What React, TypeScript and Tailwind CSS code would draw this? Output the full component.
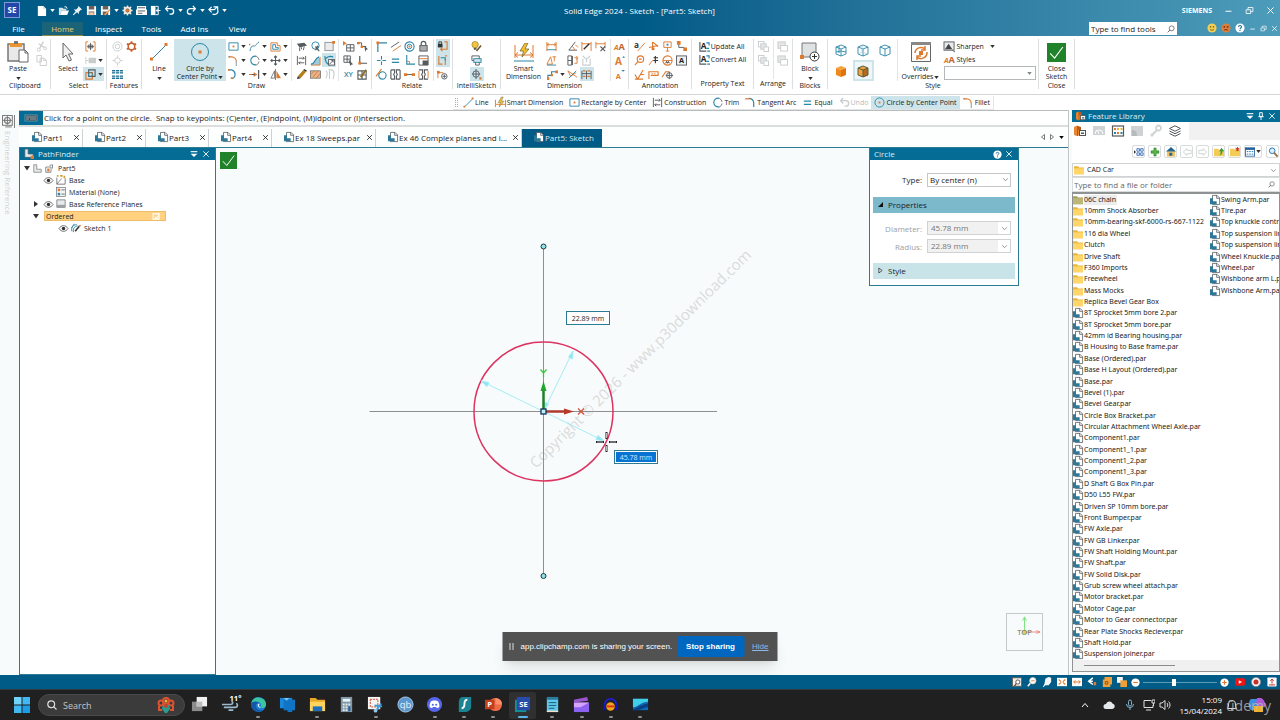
import React, { useState } from 'react';
import clsx from 'clsx';

const TEAL = '#2d86a8';
const ORANGE = '#dd7a2e';
const GRAY = '#555a5e';
const FAINT = '#c9cccd';

interface ShapeProps {
  d: string;
  c?: string;
  w?: number;
}

// Stroked path
const S: React.FC<ShapeProps> = ({ d, c = TEAL, w = 1 }) => (
  <path d={d} fill="none" stroke={c} strokeWidth={w} />
);

// Filled path
const F: React.FC<ShapeProps> = ({ d, c = ORANGE }) => <path d={d} fill={c} />;

// All small icons are drawn on a 12x12 grid
const art: Record<string, React.ReactNode> = {
  // Title bar
  doc: <><F c="#fff" d="M2 1h6l3 3v8H2z" /><S c="#b9d3df" w={0.7} d="M8 1v3h3" /></>,
  open: <><F c="#d6e4ea" d="M1 3h4l1 1h3v2H4l-2 5H1z" /><F c="#fff" d="M4 6h8l-2 5H2z" /><S c="#fff" d="M7 2h2l1 2" /></>,
  pin: <><F c="#e8f1f5" d="M7 1l4 4-1.500 .5-2 2v2.500l-2-2L2 11l-1 .2.2-1L4 7 2 5h2.500l2-2z" /></>,
  save: <><F c="#fff" d="M1 1h9l1 1v9H1z" /><F c="#6b5f57" d="M3 1h6v4H3zM3 7h6v4H3z" /><F c="#f2c9a3" d="M3.500 8h5v3h-5z" /></>,
  saveAs: <><F c="#fff" d="M1 1h9l1 1v9H1z" /><F c="#6b5f57" d="M3 1h6v4H3zM3 7h6v4H3z" /><S c="#e9a15b" w={1.600} d="M5 11l6-6" /></>,
  gearLight: <><circle cx="6" cy="6" r="3.200" fill="none" stroke="#f0e7df" strokeWidth="2.200" /><S c="#f0e7df" w={1.500} d="M6 0.500v2M6 9.500v2M.5 6h2M9.500 6h2M2 2l1.500 1.500M8.500 8.500L10 10M2 10l1.500-1.500M8.500 3.500L10 2" /><circle cx="6" cy="6" r="1.800" fill={ORANGE} /></>,
  print: <><F c="#fff" d="M1 1h10v4H1zM0 5h12v6H0z" /><S c="#4d565b" w={1} d="M2 3h8M2 6.500h8M2 9h5" /></>,
  exit: <><F c="#fff" d="M1 1h5v10H1z" /><S c="#fff" d="M6 1.500h3v9H6M11.500 6H7M8.500 4L7 6l1.500 2" /></>,
  undo: <S c="#fff" w={1.400} d="M4.500 1L1.800 4l2.700 3M2 4h5.500a2.800 2.800 0 010 6H6" />,
  redo: <S c="#fff" w={1.400} d="M7.500 1l2.700 3-2.700 3M10 4H4.500a2.800 2.800 0 000 6H6" />,
  redoAll: <S c="#fff" w={1.300} d="M4 2L1 5l3 3M1 5h6l3-3M6 2h4.500v4M5 10c4 1 6-1 6-4" />,
  undoFaint: <S c={FAINT} w={1.500} d="M4.500 1L1.800 4l2.700 3M2 4h5.500a2.800 2.800 0 010 6H6" />,

  // Clipboard, select, features
  cut: <><S c={FAINT} w={1.400} d="M8 .5L4 8M3 3l6 4" /><circle cx="3" cy="9.500" r="1.700" fill="none" stroke={FAINT} /><circle cx="10" cy="8" r="1.500" fill="none" stroke={FAINT} /></>,
  copy: <S c={FAINT} d="M1 .5h5v7H1zM4.500 3.500h4l3 2.500v5.500h-7zM8.500 3.500V6h3" />,
  selFit: <><S c={ORANGE} d="M3.500 1H1v10h2.500M8.500 1H11v10H8.500" /><S c={GRAY} d="M6 2v8M2.500 6h7M3.500 4.500h5v3h-5z" /></>,
  selBox: <><F c={FAINT} d="M4 3h8v6H4z" /><S c={FAINT} d="M1 2v8M1 6h3" /></>,
  selOver: <><S c={ORANGE} w={1.300} d="M1 4h7v7H1z" /><S c={GRAY} w={1.200} d="M4 1h7v7H4z" /><circle cx="6" cy="6" r="2.300" fill="none" stroke={TEAL} /></>,
  featRing: <><circle cx="6" cy="6" r="5" fill="none" stroke={FAINT} /><circle cx="6" cy="6" r="2.500" fill="none" stroke={FAINT} /></>,
  featGear: <><circle cx="6" cy="6" r="3.600" fill="none" stroke="#c65f2b" strokeWidth="1.600" /><S c="#c65f2b" w={2} d="M6 .3v2M6 9.700v2M1 3l1.800 1M9.200 8L11 9M1 9l1.800-1M9.200 4L11 3" /></>,
  featSun: <><circle cx="6" cy="6" r="3" fill="none" stroke={FAINT} /><S c={FAINT} d="M6 .5v2.500M6 9v2.500M.5 6H3M9 6h2.500" /></>,
  featPattern: <><F c="#1f6f94" d="M0 1h3.500v4H0zM4.300 1h3.500v4H4.300zM8.600 1H12v4H8.600zM0 7h3.500v4H0zM4.300 7h3.500v4H4.300zM8.600 7H12v4H8.600z" /><S c="#fff" w={0.800} d="M0 3h12M0 9h12" /></>,

  // Draw
  rect: <><S d="M1 2h10v8H1z" /><F d="M5 5h2v2H5z" /></>,
  curve: <><S d="M1 11C3 2 5 7 7 5s2-3 4-4" /><F d="M0 3h1.500v1.500H0z" /></>,
  offset: <><S c={ORANGE} d="M1 2h7v3h3v6H1z" /><S d="M3 4h3v3h3v2H3z" /></>,
  fillet: <><S c={ORANGE} w={1.300} d="M1 2h3a5 5 0 015 5" /><S c={GRAY} w={0.700} d="M9 7v5M0 2h2" /></>,
  tangentArc: <><S w={1.300} d="M4 1.500a5 5 0 015.500 5V11" /><S c={ORANGE} w={1.300} d="M0 2h6" /></>,
  trimC: <><S w={1.200} d="M8 10.500a4.700 4.700 0 110-9" /><S c={GRAY} w={0.800} d="M8 1.500a5 5 0 013 4M11 7a5 5 0 01-3 4" /></>,
  move: <S c={GRAY} w={1.200} d="M6 1v10M1 6h10M4.500 2.500L6 1l1.500 1.500M4.500 9.500L6 11l1.500-1.500M2.500 4.500L1 6l1.500 1.500M9.500 4.500L11 6 9.500 7.500" />,
  arc: <><S w={1.300} d="M1 1h3a5 5 0 01.5 9.500" /><F d="M0 0h2v2H0zM3 9h2v2H3z" /></>,
  extend: <><S c={GRAY} w={1.300} d="M1 6h6M10.500 1v10" /><S c={ORANGE} w={1.300} d="M5 4l3 2-3 2M0 6h3" /></>,
  mirror: <><S c={GRAY} w={0.800} d="M5 2v8H1zM6 0v12" /><F c={ORANGE} d="M7 2v8h5z" /></>,
  project: <><F c={GRAY} d="M1 3l8-1 3 3-8 2z" /><S c={GRAY} d="M4 7v4M6 7v2M9 6l-1 4" /></>,
  conic: <><circle cx="6" cy="5" r="4" fill="none" stroke={TEAL} /><S c={GRAY} w={1.400} d="M6 6l4 5M9 5l-3 5" /></>,
  corner: <><rect x="1" y="1.500" width="9" height="9" fill="#ececec" stroke="#8e9294" /><F d="M9 0h3v3H9z" /></>,
  constr: <><S c={GRAY} d="M1.500 1v10M10.500 1v10" /><S c={GRAY} d="M3 3.500h6M7.500 2L9 3.500 7.500 5M9 8.500H3M4.500 7L3 8.500 4.500 10" /></>,
  surfaceCurve: <><F c="#9ccbdc" d="M1 11c5 0 4-6 10-8v8z" /><S c={ORANGE} d="M1 11h10V2" /><S w={1.500} d="M1 10c5 0 3-6 9-8" /></>,
  arcBox: <><S w={1.300} d="M1 1c0 5 2 9 6 10M2 4c2-3 5-3 8-2" /><rect x="5" y="5" width="6.500" height="6" fill="#fff" stroke={GRAY} /><S c={GRAY} d="M6 10l4-4M8 6h2v2" /></>,
  pencil: <><F c="#b57f16" d="M2 8l6-7 3 2-6 7z" /><F c="#2b2b2b" d="M1 11l1-3 3 2zM8 1l1-1 3 2-1 1z" /></>,
  hatch: <><rect x="0.500" y="2" width="11" height="8" fill="#e9b48a" stroke={GRAY} strokeWidth="0.700" /><S c="#c8672a" w={0.800} d="M1 6l4-4M3 9l6-7M7 10l4-5" /></>,
  mirrorFaint: <S c={FAINT} w={1.200} d="M2 2c2 1 2 5 0 8M5 1h4c2 1 2 3 2 5l-1 5M6 2v9" />,
  triGrid: <><F d="M0 0l4 2.500L0 5z" /><S c={GRAY} d="M4 4h8v7H4zM8 4v7M4 7.500h8" /></>,
  polyCursor: <><S c={GRAY} d="M1 2h4v4h5" /><F d="M0 1h3v2.500H0zM4 5h2.500v2.500H4z" /><F c={GRAY} d="M8 5l4 4-2 .5L9 12z" /></>,
  gridCursor: <><S c={GRAY} d="M1 1h7v7H1zM4.500 1v7M1 4.500h7" /><F c={GRAY} d="M6 5l5 5-2 .5L8 12z" /></>,
  xy: <text x="6" y="9" fontSize="8" fontWeight="600" textAnchor="middle" fill={TEAL}>XY</text>,
  elbow: <><S c={GRAY} w={1.300} d="M3 1v8h8" /><F d="M1.500 7.500h3v3h-3z" /></>,
  gridPencil: <><S c={GRAY} w={1.200} d="M1 2h9v9H1zM5.500 2v9M1 6.500h9" /><S c="#8d6b20" w={2} d="M4 9l6-8" /></>,

  // Relate
  connect: <><S w={1.300} d="M2 12V2h10" /><F d="M.5.5h3v3h-3z" /></>,
  parallel: <><S c={GRAY} d="M1 7l9-6" /><S c={ORANGE} d="M3 11l9-6" /></>,
  concentric: <><circle cx="6" cy="6" r="5" fill="none" stroke={TEAL} strokeWidth="1.200" /><circle cx="6" cy="6" r="2.500" fill="none" stroke={TEAL} /><F d="M5 5h2v2H5z" /></>,
  lock: <><rect x="2" y="5" width="8" height="6" fill="#a9adaf" stroke={GRAY} /><S c={GRAY} w={1.300} d="M3.500 5V3a2.500 2.500 0 015 0v2" /></>,
  cross: <><S w={1.200} d="M6 1v10M1 6h10" /><F c="#fff" d="M5 5h2v2H5z" /></>,
  equal: <S w={1.500} d="M2 4.500h8M2 8h8" />,
  perp: <><S w={1.200} d="M3 0v10h9" /><S c={ORANGE} d="M3 7h3v3" /></>,
  rigid: <><S c={GRAY} d="M1 1h10v10H1z" /><S c={ORANGE} d="M1 4h10" /><F c={GRAY} d="M5 6h6v5H5z" /></>,
  tangent: <><circle cx="7" cy="7" r="4" fill="none" stroke={TEAL} strokeWidth="1.200" /><S c={ORANGE} w={1.300} d="M0 8l6-8" /></>,
  clamp: <S c={GRAY} w={1.200} d="M1 1h4v3L4 6l1 2v3H1M11 1H7v3l1 2-1 2v3h4M1 1v10M11 1v10" />,
  link: <><S c={GRAY} d="M2 6h8" /><F d="M0 4.500h3.500v3H0zM8.500 4.500H12v3H8.500z" /></>,
  clampO: <><S c={GRAY} w={1.200} d="M1 1h4v3L4 6l1 2v3H1M11 1H7v3l1 2-1 2v3h4" /><S c={ORANGE} d="M1 2v8M11 2v8" /></>,
  maintain: <><F c="#333" d="M1 3h5v4H1z" /><S c="#333" d="M2 3V1h3v2" /><S c={ORANGE} w={1.200} d="M8 1h3v8H4M6 7L4 9l2 2" /></>,
  relHandles: <><S c={ORANGE} w={1.200} d="M2 1v9h4M9 1h2M9 4v7" /><S w={1.200} d="M4 3h5v3" /></>,
  relAssist: <><S c={ORANGE} d="M1 10V4h6" /><F d="M0 2h3v3H0z" /><circle cx="8" cy="8" r="3" fill="#fff" stroke={GRAY} /><S c={GRAY} d="M8 6v4M6 8h4" /></>,

  // IntelliSketch
  bulb: <><circle cx="4.500" cy="4" r="3.500" fill="#f3c73c" stroke="#8f7a28" strokeWidth="0.700" /><F c="#555" d="M3 7.500h3v2H3z" /><S c="#6b5520" w={1.600} d="M6 11l5-6" /></>,
  layersBox: <><S c={GRAY} d="M1 1h8v5H1z" /><rect x="3" y="4" width="8" height="4" fill="#cde4ec" stroke={TEAL} /><S c={GRAY} d="M5 8v3h4V8" /></>,
  target: <><circle cx="5.500" cy="5.500" r="3.500" fill="none" stroke={GRAY} /><S c={GRAY} d="M5.500 0v11M1 5.500h9" /><F d="M9 9h2.500v2.500H9z" /></>,

  // Dimension
  dimDist: <><S c={ORANGE} d="M1 1v10M11 1v10M1 4h10M3 2.500L1 4l2 1.500M9 2.500L11 4 9 5.500" /><S d="M1 9.500h10" /></>,
  dimAngle: <><S c={GRAY} d="M2 10l7-9M2 10h9" /><S c={ORANGE} d="M5 6c2 0 3 2 3 4M9 4l3 3" /></>,
  dimPencil: <><S c={ORANGE} d="M1 1v10M11 1v10M1 3h10" /><S c="#333" w={1.600} d="M3 9l6-6" /></>,
  dimX: <><S c={ORANGE} d="M1 1v7M11 1v7M1 3h10" /><S c={GRAY} w={1.200} d="M6 6l5 5M11 6l-5 5" /></>,
  dimSym: <><S c={ORANGE} d="M1 10l4-8 2 8zM7 2h4M9 2v5" /><S d="M1 11h10" /></>,
  dimChart: <><S c={GRAY} d="M1 1h4v10H1zM1 6h4M6 1v10" /><S c={ORANGE} d="M8 3h3v6H8M10 1l2 2-2 2" /></>,
  dimFaint: <S c={FAINT} w={1.200} d="M2 4v7h8V4M2 1l3 3M10 1L7 4M6 3v5" />,
  dimStep: <><S w={1.200} d="M1 11V7h4V3h6" /><F d="M0 9h2.500v3H0zM4 5.500h2.500V8H4zM9 1.500h3v3H9z" /></>,
  dimAxes: <><S c={ORANGE} d="M1 2l10 7M1 2l3 6 6-4" /><S d="M2 10l8-8" /></>,
  dimTable: <><S c={GRAY} d="M1 2v9M11 2v9M6 2v9M1 5h10" /><S c={ORANGE} w={1.300} d="M2 2h3M7 2h3M2 8h3M7 8h3" /></>,
  styleA: <><text x="0" y="10" fontSize="8" fontStyle="italic" fontWeight="700" fill={ORANGE}>A</text><text x="5" y="10" fontSize="10" fontWeight="700" fill="#c65f2b">A</text></>,
  growA: <><text x="1" y="11" fontSize="11" fontWeight="700" fill={ORANGE}>A</text><F c={TEAL} d="M9 3l1.500-2L12 3z" /></>,
  shrinkA: <><text x="2" y="11" fontSize="8" fontWeight="700" fill={ORANGE}>A</text><F c={TEAL} d="M8 1h4l-2 2z" /></>,

  // Annotation
  leader: <><text x="0" y="8" fontSize="9" fontWeight="700" fill="#333">a</text><S c={ORANGE} d="M4 11l8-9" /></>,
  axis: <><S c={ORANGE} w={1.200} d="M1 7l10-2M5 1v8M5 1l6 5" /><F d="M4 7h3v3H4z" /></>,
  balloon: <><S c={ORANGE} d="M2 1h8v6H2zM6 7v4M4 11h4" /><F c={TEAL} d="M5 3h2v2H5z" /></>,
  connector: <><S c={GRAY} d="M3 3v4h6" /><F d="M1 0h4v4H1zM8 7h4v4H8z" /></>,
  zoomNote: <><circle cx="7" cy="4.500" r="3.500" fill="none" stroke={ORANGE} strokeWidth="1.200" /><S c={ORANGE} w={1.200} d="M4.500 7L1 11M5.500 4.500h3" /></>,
  datum: <><S c={ORANGE} d="M1 11l4-5h5" /><S c="#333" w={1.200} d="M8 1v8M6 3h5M6 6h5" /></>,
  datumTarget: <><circle cx="6" cy="6" r="5" fill="none" stroke={ORANGE} strokeWidth="1.200" /><S c={ORANGE} d="M1 6h10" /><S c="#333" d="M4 9l1-2 1 2 1-2 1 2" /></>,
  charBox: <><rect x="0.500" y="1" width="11" height="10" fill="#eef0f1" stroke={GRAY} /><text x="6" y="9" fontSize="8" fontWeight="700" textAnchor="middle" fill="#222">A</text></>,
  surface: <S c={ORANGE} w={1.200} d="M1 6l3 5 6-10M1 11h9M7 6h4" />,
  callout: <><S c={ORANGE} w={1.200} d="M1 11V3h10v4H3M4 5h1M7 5h1" /></>,
  edgeCond: <><S c={ORANGE} w={1.200} d="M0 9l4-6h4" /><circle cx="8" cy="7" r="3" fill="none" stroke={GRAY} /><S c={GRAY} d="M8 3v8M4 7h8" /></>,
  propText: <><S c={GRAY} w={1.200} d="M1 1v10h7" /><text x="2" y="9" fontSize="9" fontWeight="700" fill="#222">A</text><S w={1.300} d="M8 2h3v3M8 8h3M9 11h3" /></>,

  // Arrange
  arr1: <><rect x="0.500" y="0.500" width="6" height="6" fill="none" stroke={FAINT} /><rect x="3" y="3" width="6" height="6" fill="#e4e6e7" stroke={FAINT} /><rect x="6.500" y="6.500" width="5" height="5" fill="#fff" stroke={FAINT} /></>,
  arr2: <><rect x="1" y="1" width="8" height="7" fill="#e4e6e7" stroke={FAINT} /><rect x="4" y="5" width="7.500" height="6" fill="#fff" stroke={FAINT} /></>,

  // View styles
  cubeWire: <><S w={0.900} d="M1 3l5-2 5 2v7l-5 2-5-2zM1 3l5 2 5-2M6 5v7M4 2v7M1 8l5-1 5 1" /></>,
  cubeHid: <><S w={0.900} d="M1 3l5-2 5 2v7l-5 2-5-2zM1 3l5 2 5-2M6 5v7" /><S c="#9fc9d8" w={0.700} d="M1 10l4-2 6 2M5 1.500V8" /></>,
  cubeVis: <S w={0.900} d="M1 3l5-2 5 2v7l-5 2-5-2zM1 3l5 2 5-2M6 5v7" />,
  cubeShade: <><F c="#f8a13c" d="M1 3l5-2 5 2-5 2z" /><F c="#ee8a1c" d="M1 3l5 2v7l-5-2z" /><F c="#e2720c" d="M11 3L6 5v7l5-2z" /></>,
  cubeEdge: <><F c="#f8a13c" d="M1 3l5-2 5 2v7l-5 2-5-2z" /><F c="#b56a1d" d="M11 3L6 5v7l5-2z" /><S c="#55603c" d="M1 3l5-2 5 2v7l-5 2-5-2zM1 3l5 2 5-2M6 5v7" /></>,
  sharpen: <><rect x="0" y="1" width="11" height="9" fill="#e9ebec" stroke={GRAY} /><path d="M1 9l4-6 4 6z" fill="#444" /><S c={GRAY} d="M9 10l3 2" /></>,

  line: <><S w={1} d="M2 10.500L10.500 2" /><F d="M.5 9.500h2v2h-2zM9.500.5h2v2h-2z" /></>,
  smart: <><S c={ORANGE} d="M.5 3v8M11.500 3v8M1 8h10" /><F c="#f3c033" d="M7 0L3.500 6H6l-1.500 5L10 4.500H7L9 0z" /><S c="#6a6a50" w={0.500} d="M7 0L3.500 6H6l-1.500 5L10 4.500H7L9 0z" /></>,
  circle: <><circle cx="6" cy="6" r="5" fill="none" stroke={TEAL} /><F d="M5 5h2v2H5z" /></>,

  // Documents and tree
  part: <><F c="#fff" d="M3 .5h5l3 3v8H3z" /><S c="#4d5357" d="M3 .5h5.500l3 3v8H3zM8 .5V4h3.500" w={0.900} /><F c="#2d7798" d="M0 4h3.500v3.500H8V11H0z" /></>,
  folder: <><F c="#eab53c" d="M0 1.500h5l1 1.500h6v8H0z" /><F c="#ffd667" d="M0 4h12v7H0z" /></>,
  folderDark: <><F c="#a89f5c" d="M0 1.500h5l1 1.500h6v8H0z" /><F c="#bdb777" d="M0 4h12v7H0z" /></>,
  eye: <><S c="#333" w={0.900} d="M0 6c3-5 9-5 12 0-3 5-9 5-12 0z" /><circle cx="6" cy="6" r="2.300" fill="#333" /></>,
  block: <><path d="M1 1h4v6h6v4H1z" fill="#e7e9ea" stroke="#6c7174" strokeWidth="0.900" /></>,
  blockHeader: <><path d="M1 0h4v6h6v4H1z" fill="#e7e9ea" stroke="#46616c" strokeWidth="0.900" /><F d="M8 8h4v4H8z" /></>,
  partPin: <><S c={GRAY} w={0.900} d="M1 4h7v7H1zM6 2l4-1v5" /><F d="M3 6h3v4H3z" /></>,
  base: <><S c={GRAY} w={0.900} d="M1 3v8h10V4" /><S c={GRAY} w={0.800} d="M1 11l6-7" /><F c="#caa03a" d="M1 0h2v2H1zM5 0h3v2H5zM9 1h2v3H9z" /></>,
  material: <><rect x="0.500" y="0.500" width="11" height="11" fill="#f4f5f5" stroke={GRAY} strokeWidth="0.700" /><F d="M2 2h3v3H2z" /><F c={TEAL} d="M2 7h3v3H2z" /><S c={GRAY} d="M6.500 3.500h4M6.500 8.500h4" /></>,
  plane: <><path d="M1 1h10v9H1z" fill="#e7e9ea" stroke="#6c7174" strokeWidth="0.900" /><F c="#9aa0a3" d="M1 7h10v3H1z" /></>,
  sketch: <><S w={1.100} d="M1 10c-1-4 1-8 6-8M3 11C2 7 4 4 8 3.500M.5 6L4 1" /><S c="#333" w={1.800} d="M5 10l5-6" /><F d="M9 3l2-1 1 1-1.500 2z" /></>,

  // Feature library
  library: <><F c="#e78531" d="M0 2l3-1.500L6 2v8l-3 1-3-1z" /><F c="#b85c1c" d="M3 1l4 1v3H4v6l-1 0z" /><rect x="5.500" y="5.500" width="6" height="5" fill="#fff" stroke="#555" /><F c="#555" d="M7 7.500h3v1.500H7z" /></>,
  gaugeFaint: <><F c="#cfd2d3" d="M0 1h12v9H0z" /><S c="#fff" d="M2 9a4 4 0 018 0M6 9L4 5" /></>,
  tiles: <><rect x="0.500" y="1" width="11" height="10" fill="#fff" stroke={GRAY} strokeWidth="1.200" /><F d="M2 3h2v2H2zM5 7h2v2H5z" /><F c="#e3b23a" d="M5 3h2v2H5zM8.500 3h2v2h-2z" /><F c={TEAL} d="M2 7h2v2H2zM8.500 7h2v2h-2z" /></>,
  rss: <><F c="#cfd2d3" d="M0 1h12v10H0z" /><F c="#b6babc" d="M1 5c4 0 5 2 5 6H1z" /></>,
  wrench: <S c="#cfd2d3" w={1.800} d="M1 11l6-6M7 5a2.500 2.500 0 113 0 2.500 2.500 0 01-3 0M1 9l2 2" />,
  layers: <S c={GRAY} w={1} d="M6 .8l5.500 2.700L6 6.200.5 3.500zM.5 6L6 8.700 11.500 6M.5 8.500L6 11.200l5.500-2.700" />,
  treeGrid: <><F c="#333" d="M0 4l2.500 2L0 8z" /><S c="#2b5fb0" d="M3.500 2h3v3h-3zM8 2h3v3H8zM3.500 7h3v3h-3zM8 7h3v3H8z" /></>,
  plus: <><S c="#2f8f2f" w={3.400} d="M6 1v10M1 6h10" /><S c="#6fc04e" w={1.400} d="M6 2v8M2 6h8" /></>,
  home: <><F c="#f0c169" d="M1 5h10v6.500H1z" /><F c="#23668f" d="M6 0l6 5.500H0zM4 7h3.500v3.500H4z" /></>,
  back: <S c={FAINT} d="M6 2L1.500 6 6 10V8h5V4H6z" />,
  forward: <S c={FAINT} d="M6 2l4.500 4L6 10V8H1V4h5z" />,
  folderUp: <><F c="#f3cb55" d="M0 2h5l1 1.500h6V11H0z" /><F c="#3a9a34" d="M5 10c3 0 3-3 3-5H6l3-4 3 4h-2c0 3-1 5-5 5z" /></>,
  folderNew: <><F c="#f3cb55" d="M0 2h5l1 1.500h6V11H0z" /><S c="#d33b20" w={1.200} d="M9 0v5M6.500 2.500h5M7 1l4 3.500M11 1L7 4.500" /></>,
  tableView: <><rect x="0.500" y="1" width="11" height="10" fill="#fff" stroke="#28629c" /><F c="#28629c" d="M0 1h12v2.500H0z" /><S c="#3c86b8" w={1.200} d="M2 5.500h2M5 5.500h2M8 5.500h2M2 8.500h2M5 8.500h2M8 8.500h2" /></>,
  search: <><circle cx="5" cy="4.500" r="3.400" fill="#d9effb" stroke="#3578b5" strokeWidth="1.200" /><S c="#9a6a3a" w={2} d="M7.500 7l4 4.500" /></>,
  find: <><circle cx="7" cy="5" r="3.700" fill="none" stroke="#444" strokeWidth="1" /><S c="#444" w={1.200} d="M4.500 7.500L1 11" /></>,
  command: <><rect x="0" y="3" width="12" height="6" fill="#37474f" stroke="#8fb6c6" strokeWidth="0.600" /><S c="#c8dbe3" w={0.700} d="M1 5h10M1 7h3M5 7h6" /></>,
  engRef: <><rect x="0.500" y="0.500" width="9" height="9" fill="none" stroke="#777" strokeWidth="0.900" /><circle cx="5" cy="5" r="2.700" fill="none" stroke="#777" /><S c="#777" w={0.900} d="M5 1v8M1 5h8M11.500 0v12M3 11h6" /></>,

  // Status bar
  stZoomArea: <><rect x="0.500" y="1" width="11" height="10" fill="#f4efe9" stroke="#6a5a4d" /><circle cx="7" cy="6" r="2.500" fill="#fff" stroke="#444" /><S c="#444" w={1.300} d="M5 8l-2 3" /></>,
  stZoom: <><circle cx="7" cy="4.500" r="3.800" fill="#fff" stroke="#d8c8b8" /><S c={ORANGE} d="M5 4.500h4" /><S c="#fff" w={1.800} d="M4 7.500L1 11" /></>,
  stPan: <F c="#f3f6f8" d="M1 12l2-4 1-6 2-1 2-1 3 1v5l-3 4H4l-2 2z" />,
  stFit: <><F c="#fff" d="M0 1h12v10H0z" /><S c={ORANGE} w={1.300} d="M2 3l3 2.500M10 3L7 5.500M2 9l3-2.500M10 9L7 6.500" /></>,
  stWidth: <><F c="#fff" d="M0 1h12v10H0z" /><S c={ORANGE} w={1.200} d="M2 6h8M4 4L2 6l2 2M8 4l2 2-2 2" /></>,
  stRotate: <><S c="#fff" w={1.800} d="M7 1L2 5l5 4M2 5h5" /><F d="M8 6h3v4H8z" /></>,
  stCube: <><F c="#f0a03a" d="M1 3h9v9H1zM3 0h9v9h-2V3H3z" /><S c="#7c4a12" d="M4 5.500h3v3H4z" /></>,
  stStack: <><F c="#f5f5f5" d="M0 0h7v7H0z" /><F c="#f0a03a" d="M4 4h8v8H4z" /></>,
  minus: <><circle cx="6" cy="6" r="5.500" fill="#fff" /><S c={ORANGE} w={1.500} d="M3 6h6" /></>,
  plusRound: <><circle cx="6" cy="6" r="5.500" fill="#fff" /><S c={ORANGE} w={1.500} d="M3 6h6M6 3v6" /></>,
  youtube: <><rect x="0" y="1.500" width="12" height="9" rx="2" fill="#f01414" /><F c="#fff" d="M4.500 3.800L8.500 6l-4 2.200z" /></>,
  record: <><circle cx="6" cy="6" r="5.500" fill="#f3f3f3" stroke="#8a8a8a" /><circle cx="6" cy="6" r="3" fill="#c5302b" /></>,
  upload: <><rect x="0.500" y="0.500" width="11" height="11" rx="1" fill="#fff" /><S c="#c5302b" w={1.200} d="M6 8V2.500M4 4.500l2-2 2 2M2.500 9.500h7" /></>,
  smile: <><circle cx="6" cy="6" r="5.500" fill="#f2cf57" /><F c="#5d4a12" d="M3.500 4h1.500v1.500H3.500zM7 4h1.500v1.500H7z" /><S c="#5d4a12" w={0.900} d="M3.500 7.500c1 1.500 4 1.500 5 0" /></>,
  frown: <><circle cx="6" cy="6" r="5.500" fill="#dc7f3d" /><F c="#6b1f0c" d="M3 4h2v1.500H3zM7 4h2v1.500H7z" /><S c="#6b1f0c" w={1} d="M3.500 9c1-1.500 4-1.500 5 0" /></>,
  help: <><circle cx="6" cy="6" r="5.500" fill="#fff" /><S c="#1c6e93" w={1.300} d="M4.200 4.800c0-2.300 3.600-2.300 3.600 0C7.800 6 6 6 6 7.500M6 8.500v1.200" /></>,
  check: <><F c="#218329" d="M0 0h12v12H0z" /><S c="#fff" w={0.700} d="M2 6.500L4.800 9.500 10 2.500" /></>,
  minimize: <S c="#fff" w={1.300} d="M2 7h8" />,
  restore: <S c="#fff" w={1.100} d="M1.500 5h6v5h-6zM4 5V2h6.500v5.500H8" />,
  close: <S c="#fff" w={1.300} d="M2 2l8 8M10 2l-8 8" />,
  closeDark: <S c="#222" w={1.500} d="M2 2l8 8M10 2l-8 8" />,
  options: <><S c="#fff" w={1.600} d="M1 2.500h10" /><F c="#fff" d="M1 5.500h10L6 10.500z" /></>,
  pushpin: <S c="#fff" w={1.400} d="M4 1h4v6H4zM2 7h8M6 7v5" />,
  chevron: <S c="#666" w={1.200} d="M2 4l4 4 4-4" />,
};

interface IconProps {
  name: string;
  className?: string;
}

const Icon: React.FC<IconProps> = ({ name, className = 'size-3' }) => (
  <svg viewBox="0 0 12 12" className={clsx('shrink-0 overflow-visible', className)} aria-hidden="true">
    {art[name]}
  </svg>
);

const Caret: React.FC<{ className?: string }> = ({ className = 'text-[#333]' }) => (
  <svg viewBox="0 0 6 4" className={clsx('w-[5px] h-[3px] shrink-0', className)} aria-hidden="true">
    <path d="M0 0h6L3 4z" fill="currentColor" />
  </svg>
);

interface ToolProps {
  name: string;
  active?: boolean;
  caret?: boolean;
}

const Tool: React.FC<ToolProps> = ({ name, active, caret }) => (
  <button
    type="button"
    aria-label={name}
    className={clsx(
      'h-[14px] flex items-center',
      caret ? 'w-[21px] justify-end gap-[2px] pr-px' : 'w-[14px] justify-center',
      active && 'bg-[#cce4ea]',
    )}
  >
    <Icon name={name} className="size-[11px]" />
    {caret && <Caret />}
  </button>
);

// Columns of three tools, read top to bottom
const ToolColumn: React.FC<{ names: string[]; active?: string[]; caret?: string[] }> = ({ names, active = [], caret = [] }) => (
  <div className="flex flex-col">
    {names.map(n => (
      <Tool key={n} name={n} active={active.includes(n)} caret={caret.includes(n)} />
    ))}
  </div>
);

const Divider: React.FC<{ className?: string }> = ({ className = 'mx-[2px]' }) => (
  <div className={clsx('w-px bg-[#e3e5e6] self-stretch', className)} />
);

interface GroupProps {
  label: string;
  width: string;
  children: React.ReactNode;
}

const Group: React.FC<GroupProps> = ({ label, width, children }) => (
  <section className={clsx('shrink-0 flex flex-col border-r border-[#dcdfe0]', width)}>
    <div className="h-[42px] flex justify-center">{children}</div>
    <div className="text-center leading-[10px] whitespace-nowrap">{label}</div>
  </section>
);

const BigButton: React.FC<{ lines: string[]; caret?: boolean; active?: boolean; width: string; children: React.ReactNode }> = ({
  lines,
  caret,
  active,
  width,
  children,
}) => (
  <button type="button" className={clsx('h-[42px] shrink-0 flex flex-col items-center', width, active && 'bg-[#cce4ea]')}>
    <span className="h-[26px] flex items-center">{children}</span>
    {lines.map((l, i) => (
      <span key={l} className="leading-[8px] whitespace-nowrap flex items-center gap-px">
        {l}
        {caret && lines.length > 1 && i === lines.length - 1 && <Caret />}
      </span>
    ))}
    {caret && lines.length === 1 && <Caret className="mt-1 text-[#333]" />}
  </button>
);

const TitleBar = () => (
  <header className="bg-linear-to-r from-[#005b87] from-50% to-[#4d9cba] text-white">
    <div className="h-[22px] flex items-center pb-[2px]">
      <div className="flex-1 flex items-center pl-1">
        <div className="size-4 bg-[#2446a8] border border-[#7f9ad8] font-bold text-[8px] leading-[14px] text-center">SE</div>
        <div className="flex items-center gap-[3px] pl-4">
          <Icon name="doc" className="size-[11px]" />
          <Caret className="text-white" />
          <Icon name="open" className="size-[11px]" />
          <Icon name="pin" className="size-[11px]" />
          <Icon name="save" className="size-[11px]" />
          <Icon name="saveAs" className="size-[11px]" />
          <Caret className="text-white" />
          <Icon name="gearLight" className="size-[11px]" />
          <Icon name="print" className="size-[11px]" />
          <Icon name="exit" className="size-[11px]" />
          <Icon name="undo" className="size-[11px]" />
          <Caret className="text-white" />
          <Icon name="redo" className="size-[11px]" />
          <Caret className="text-white" />
          <Icon name="redoAll" className="size-[11px]" />
          <Caret className="text-white" />
        </div>
      </div>
      <h1>Solid Edge 2024 - Sketch - [Part5: Sketch]</h1>
      <div className="flex-1 flex items-center justify-end gap-3 pr-[5px]">
        <span className="font-bold text-[7px]">SIEMENS</span>
        <button type="button" aria-label="Minimize"><Icon name="minimize" className="size-[9px]" /></button>
        <button type="button" aria-label="Restore"><Icon name="restore" className="size-[9px]" /></button>
        <button type="button" aria-label="Close"><Icon name="close" className="size-[9px]" /></button>
      </div>
    </div>
    <div className="h-[14px] flex items-start">
      <nav className="flex-1 flex leading-[14px]">
        <button type="button" className="w-[37px]">File</button>
        <button type="button" className="w-[50px] pl-px flex justify-center">
          <span className="w-[41px] h-[14px] text-[#e8cf72] bg-[#1b6478] border-b border-[#8a8a4a]">Home</span>
        </button>
        {['Inspect', 'Tools', 'Add Ins', 'View'].map(t => (
          <button key={t} type="button" className="w-[43px]">{t}</button>
        ))}
      </nav>
      <label className="flex items-center w-[88px] h-[13px] bg-white px-[2px]">
        <input type="text" aria-label="Find tools" placeholder="Type to find tools" className="w-0 flex-1 outline-none placeholder:text-[#222]" />
        <Icon name="find" className="size-[8px]" />
      </label>
      <div className="h-3 flex items-center gap-[4px] pl-[30px] pr-[2px]">
        <Icon name="smile" className="size-[10px]" />
        <Icon name="frown" className="size-[10px]" />
        <Icon name="help" className="size-[10px]" />
        <Icon name="minimize" className="size-[7px]" />
        <Icon name="restore" className="size-[7px]" />
        <Icon name="close" className="size-[7px]" />
      </div>
    </div>
  </header>
);

const Ribbon = () => (
  <div className="bg-white border-b border-[#d4d6d7] flex h-[59px] pt-[3px] pb-[5px] overflow-hidden text-[7px]">
    <Group label="Clipboard" width="w-[51px]">
      <BigButton lines={['Paste']} caret width="w-[33px]">
        <svg viewBox="0 0 22 22" className="size-[22px]" aria-hidden="true">
          <path d="M1 3h16v17H1z" fill="#e9e9e9" stroke="#777" strokeWidth="1.500" />
          <path d="M3 2h12v4H3z" fill="#ea9432" />
          <path d="M7 0h4v3H7z" fill="#777" />
          <path d="M12 9h6l3 3v9h-9z" fill="#fff" stroke="#666" />
          <path d="M18 9v3h3" fill="none" stroke="#666" />
        </svg>
      </BigButton>
      <ToolColumn names={['cut', 'copy']} />
    </Group>
    <Group label="Select" width="w-[56px]">
      <BigButton lines={['Select']} width="w-[30px]">
        <svg viewBox="0 0 14 20" className="w-[14px] h-[20px]" aria-hidden="true">
          <path d="M2 1l10 11H7.500l3 6-2.500 1-3-6L2 16z" fill="#f0f1f1" stroke="#666" />
        </svg>
      </BigButton>
      <ToolColumn names={['selFit', 'selBox', 'selOver']} active={['selOver']} caret={['selBox', 'selOver']} />
    </Group>
    <Group label="Features" width="w-[35px]">
      <ToolColumn names={['featRing', 'featSun', 'featPattern']} />
      <ToolColumn names={['featGear']} />
    </Group>
    <Group label="Draw" width="w-[230px]">
      <BigButton lines={['Line']} caret width="w-[30px]">
        <svg viewBox="0 0 18 18" className="size-[18px]" aria-hidden="true">
          <path d="M2 16L16 2" stroke={TEAL} />
          <path d="M0 14.500h3v3H0zM14.500 0h3v3h-3z" fill={ORANGE} />
        </svg>
      </BigButton>
      <BigButton lines={['Circle by', 'Center Point']} caret active width="w-[52px]">
        <svg viewBox="0 0 20 20" className="size-5" aria-hidden="true">
          <circle cx="10" cy="10" r="8.500" fill="none" stroke={TEAL} />
          <path d="M8.500 8.500h3v3h-3z" fill={ORANGE} />
        </svg>
      </BigButton>
      <ToolColumn names={['rect', 'fillet', 'arc']} caret={['rect', 'fillet', 'arc']} />
      <ToolColumn names={['curve', 'trimC', 'extend']} caret={['curve', 'trimC', 'extend']} />
      <ToolColumn names={['offset', 'move', 'mirror']} caret={['offset', 'move', 'mirror']} />
      <Divider />
      <ToolColumn names={['project', 'constr', 'pencil']} />
      <ToolColumn names={['conic', 'surfaceCurve', 'hatch']} />
      <ToolColumn names={['corner', 'arcBox', 'mirrorFaint']} active={['arcBox']} />
      <Divider />
      <ToolColumn names={['triGrid', 'gridCursor', 'xy']} />
      <ToolColumn names={['polyCursor', 'elbow', 'gridPencil']} />
    </Group>
    <Group label="Relate" width="w-[81px]">
      <ToolColumn names={['connect', 'cross', 'tangent']} />
      <ToolColumn names={['parallel', 'equal', 'clamp']} />
      <ToolColumn names={['concentric', 'perp', 'link']} />
      <ToolColumn names={['lock', 'rigid', 'clampO']} />
      <Divider />
      <ToolColumn names={['maintain', 'relHandles', 'relAssist']} active={['maintain', 'relHandles']} />
    </Group>
    <Group label="IntelliSketch" width="w-[48px]">
      <ToolColumn names={['bulb', 'layersBox', 'target']} active={['target']} />
    </Group>
    <Group label="Dimension" width="w-[128px]">
      <BigButton lines={['Smart', 'Dimension']} width="w-[42px]">
        <svg viewBox="0 0 20 19" className="w-5 h-[19px]" aria-hidden="true">
          <path d="M1 2v13M19 2v13M1 12h18M4 9.500L1 12l3 2.500M16 9.500l3 2.500-3 2.500" fill="none" stroke={ORANGE} />
          <path d="M0 18h20" stroke={TEAL} />
          <path d="M11 0L6 8h3.500L8 14l7-8h-4l3-6z" fill="#f6c02c" stroke="#6a5b30" strokeWidth="0.700" />
        </svg>
      </BigButton>
      <ToolColumn names={['dimDist', 'dimSym', 'dimStep']} caret={['dimStep']} />
      <ToolColumn names={['dimAngle', 'dimChart', 'dimAxes']} />
      <ToolColumn names={['dimPencil', 'dimFaint', 'dimTable']} active={['dimTable']} />
      <ToolColumn names={['dimX']} />
      <Divider />
      <ToolColumn names={['styleA', 'growA', 'shrinkA']} />
    </Group>
    <Group label="Annotation" width="w-[63px]">
      <ToolColumn names={['leader', 'zoomNote', 'surface']} />
      <ToolColumn names={['axis', 'datum', 'callout']} />
      <ToolColumn names={['balloon', 'datumTarget', 'edgeCond']} />
      <ToolColumn names={['connector', 'charBox']} />
    </Group>
    <Group label="Property Text" width="w-[62px]">
      <div className="flex flex-col gap-px pt-px">
        {['Update All', 'Convert All'].map(t => (
          <button key={t} type="button" className="h-3 flex items-center gap-px whitespace-nowrap">
            <Icon name="propText" className="size-[11px]" />
            {t}
          </button>
        ))}
      </div>
    </Group>
    <Group label="Arrange" width="w-[39px]">
      <div className="flex gap-[2px]">
        <div><Tool name="arr1" /><Tool name="arr1" /></div>
        <Divider className="mx-0" />
        <div><Tool name="arr2" /><Tool name="arr2" /></div>
      </div>
    </Group>
    <Group label="Blocks" width="w-[35px]">
      <BigButton lines={['Block']} caret width="w-[33px]">
        <svg viewBox="0 0 20 20" className="size-5" aria-hidden="true">
          <path d="M2 1h14v14H2z" fill="#dfe2e3" stroke="#777" />
          <path d="M0 13h4v4H0z" fill={ORANGE} />
          <circle cx="14.500" cy="14.500" r="4.500" fill="#fff" stroke="#333" />
          <path d="M14.500 12v5M12 14.500h5" stroke="#333" />
        </svg>
      </BigButton>
    </Group>
    <Group label="Style" width="w-[211px]">
      <div className="grid grid-cols-3 w-[66px]">
        {['cubeWire', 'cubeHid', 'cubeVis', 'cubeShade', 'cubeEdge'].map(n => (
          <button
            key={n}
            type="button"
            aria-label={n}
            className={clsx('h-[21px] w-[21px] flex items-center justify-center', n === 'cubeEdge' && 'border-2 border-[#cce4ea] bg-[#eef6f8]')}
          >
            <Icon name={n} className="size-3" />
          </button>
        ))}
      </div>
      <Divider className="mx-0" />
      <BigButton lines={['View', 'Overrides']} caret width="w-[46px]">
        <svg viewBox="0 0 20 20" className="size-5" aria-hidden="true">
          <path d="M.5.5h19v19H.5z" fill="#fff" stroke="#666" />
          <path d="M0 0h20v3H0z" fill="#888" />
          <path d="M4 11a6 6 0 0110-4M16 10a6 6 0 01-10 5M14 4v4h-4M6 18v-4h4" fill="none" stroke={ORANGE} strokeWidth="1.500" />
          <path d="M8 9h4v4H8z" fill={ORANGE} />
        </svg>
      </BigButton>
      <div className="w-[92px] flex flex-col gap-px pt-px">
        <button type="button" className="h-3 flex items-center gap-[2px]">
          <Icon name="sharpen" className="size-[11px]" />
          Sharpen
          <Caret className="ml-1 text-[#333]" />
        </button>
        <button type="button" className="h-3 flex items-center gap-[2px]">
          <Icon name="styleA" className="size-[11px]" />
          Styles
        </button>
        <div className="relative h-[14px]">
          <select aria-label="Style" className="appearance-none w-full h-full border border-[#b5b8ba] bg-white">
            <option></option>
          </select>
          <Caret className="absolute right-1 top-[6px] text-[#888]" />
        </div>
      </div>
    </Group>
    <Group label="Close" width="w-[36px]">
      <BigButton lines={['Close', 'Sketch']} width="w-[34px]">
        <Icon name="check" className="size-[19px]" />
      </BigButton>
    </Group>
  </div>
);

const quickTools = [
  { icon: 'line', label: 'Line' },
  { icon: 'smart', label: 'Smart Dimension' },
  { icon: 'rect', label: 'Rectangle by Center' },
  { icon: 'constr', label: 'Construction' },
  { icon: 'trimC', label: 'Trim' },
  { icon: 'tangentArc', label: 'Tangent Arc' },
  { icon: 'equal', label: 'Equal' },
  { icon: 'undoFaint', label: 'Undo' },
  { icon: 'circle', label: 'Circle by Center Point' },
  { icon: 'fillet', label: 'Fillet' },
];

const QuickToolbar = () => (
  <div className="h-[15px] bg-white pl-[453px] flex items-end text-[7px]">
    <div className="h-[14px] flex items-center border-b border-r border-[#e2e4e5] pl-[2px]">
      <div className="w-[3px] h-[9px] mr-[2px] border-x border-dotted border-[#aaa]" />
      {quickTools.map(t => (
        <button
          key={t.label}
          type="button"
          disabled={t.label === 'Undo'}
          className={clsx(
            'h-[13px] flex items-center gap-px px-[3px] whitespace-nowrap',
            t.label.startsWith('Circle') && 'bg-[#cce4ea]',
            t.label === 'Undo' && 'text-[#b8bbbc]',
          )}
        >
          <Icon name={t.icon} className="size-[11px]" />
          {t.label}
        </button>
      ))}
    </div>
  </div>
);

const docTabs = [
  { name: 'Part1', width: 'w-[63px]' },
  { name: 'Part2', width: 'w-[63px]' },
  { name: 'Part3', width: 'w-[63px]' },
  { name: 'Part4', width: 'w-[63px]' },
  { name: 'Ex 18 Sweeps.par', width: 'w-[104px]' },
  { name: 'Ex 46 Complex planes and i...', width: 'w-[146px]' },
];

const DocTabs = () => (
  <div className="h-[21px] shrink-0 flex items-end bg-[#fdfefe] border-b border-[#2b7b92] pl-px">
    {docTabs.map(t => (
      <div key={t.name} className={clsx('h-[18px] flex items-center pl-3 pr-[2px] pb-[2px] border-r border-[#cfd2d3]', t.width)}>
        <button type="button" className="flex-1 flex items-center gap-px whitespace-nowrap">
          <Icon name="part" className="size-[10px]" />
          {t.name}
        </button>
        <button type="button" aria-label={`Close ${t.name}`}>
          <Icon name="closeDark" className="size-[7px]" />
        </button>
      </div>
    ))}
    <button type="button" className="h-[18px] w-[80px] bg-[#005b87] text-[#dcecf2] flex items-center gap-px pl-3 pb-[2px]">
      <Icon name="part" className="size-[10px]" />
      Part5: Sketch
    </button>
    <div className="ml-auto self-center flex items-center gap-[5px] pr-1">
      <svg viewBox="0 0 4 6" className="w-1 h-[6px]" aria-hidden="true"><path d="M3.500.5v5L.5 3z" fill="none" stroke="#444" strokeWidth="0.700" /></svg>
      <svg viewBox="0 0 4 6" className="w-1 h-[6px]" aria-hidden="true"><path d="M.5.5v5L3.500 3z" fill="none" stroke="#444" strokeWidth="0.700" /></svg>
      <Caret className="text-black" />
    </div>
  </div>
);

const Expander: React.FC<{ open: boolean }> = ({ open }) => (
  <svg viewBox="0 0 6 6" className="size-[6px] shrink-0" aria-hidden="true">
    <path d={open ? 'M0 1h6L3 5.500z' : 'M1 0l4 3-4 3z'} fill="#333" />
  </svg>
);

const PathFinder = () => {
  const [open, setOpen] = useState(true);

  return (
    <aside className="w-[197px] shrink-0 bg-white border border-t-0 border-[#2b7b92]">
      <div className="h-3 bg-[#056d95] text-[#dcecf2] leading-[10px] flex items-center pl-1 pr-[5px]">
        <Icon name="blockHeader" className="size-[10px]" />
        <h2 className="pl-1 pb-px flex-1">PathFinder</h2>
        <Icon name="options" className="size-[8px] mr-1" />
        <button type="button" aria-label="Close PathFinder"><Icon name="close" className="size-[8px]" /></button>
      </div>
      <ul className="pt-[2px] text-[7px] [&>li]:h-3 [&>li]:flex [&>li]:items-center [&>li]:gap-[3px]">
        <li className="pl-1">
          <button type="button" aria-label="Toggle" onClick={() => setOpen(!open)}><Expander open={open} /></button>
          <Icon name="block" className="size-[9px]" />
          <Icon name="partPin" className="size-[9px]" />
          <span className="pl-px">Part5</span>
        </li>
        {open && (
          <>
            <li className="pl-6"><Icon name="eye" className="size-[9px]" /><Icon name="base" className="size-[10px]" />Base</li>
            <li className="pl-9"><Icon name="material" className="size-[10px]" />Material (None)</li>
            <li className="pl-[13px]">
              <Expander open={false} />
              <span className="pl-[2px]"><Icon name="eye" className="size-[9px]" /></span>
              <Icon name="plane" className="size-[10px]" />
              Base Reference Planes
            </li>
            <li className="pl-[13px]">
              <Expander open />
              <span className="ml-[2px] w-[122px] h-[10px] bg-[#ffd181] border border-[#eebb66] flex items-center justify-between pl-px pr-1">
                Ordered
                <svg viewBox="0 0 10 8" className="w-[9px] h-[7px]" aria-hidden="true">
                  <path d="M1 1h7v6H1zM3 4l2 2 4-5" fill="none" stroke="#fff" strokeWidth="1.200" />
                </svg>
              </span>
            </li>
            <li className="pl-[39px]"><Icon name="eye" className="size-[9px]" /><Icon name="sketch" className="size-[10px]" />Sketch 1</li>
          </>
        )}
      </ul>
    </aside>
  );
};

const CircleDialog = () => (
  <section className="absolute right-[49px] top-0 w-[150px] bg-white border border-t-0 border-[#2b7b92]">
    <div className="h-3 bg-[#056d95] text-[#dcecf2] leading-[10px] flex items-center pl-1 pr-[5px]">
      <h2 className="flex-1 pb-px">Circle</h2>
      <Icon name="help" className="size-[9px] mr-[3px]" />
      <button type="button" aria-label="Close dialog"><Icon name="close" className="size-[8px]" /></button>
    </div>
    <div className="px-[3px]">
      <div className="h-[37px] flex items-center gap-[5px] pr-1 pt-[2px]">
        <label htmlFor="circle-type" className="flex-1 text-right">Type:</label>
        <div className="relative w-[84px]">
          <select id="circle-type" className="appearance-none w-full h-[14px] px-[2px] bg-white border border-[#c4c7c9] leading-[10px]">
            <option>By center (n)</option>
          </select>
          <Icon name="chevron" className="absolute right-[2px] top-[3px] size-[7px]" />
        </div>
      </div>
      <button type="button" className="w-full h-4 pb-px bg-[#7cb9cb] flex items-center gap-[5px] pl-[5px]">
        <svg viewBox="0 0 6 6" className="size-[5px]" aria-hidden="true"><path d="M6 0v6H0z" fill="#111" /></svg>
        Properties
      </button>
      <div className="pt-2 pb-[10px] flex flex-col gap-1 text-[#9da0a2]">
        {[
          { id: 'diameter', label: 'Diameter:', value: '45.78 mm' },
          { id: 'radius', label: 'Radius:', value: '22.89 mm' },
        ].map(f => (
          <div key={f.id} className="flex items-center gap-[5px] pr-1">
            <label htmlFor={f.id} className="flex-1 text-right">{f.label}</label>
            <div className="relative w-[84px]">
              <select id={f.id} disabled className="appearance-none w-full h-[14px] px-[3px] bg-[#f1f1f1] border border-[#d0d2d3] leading-[10px] text-[#777]">
                <option>{f.value}</option>
              </select>
              <span className="absolute right-px top-px h-3 w-3 bg-white flex items-center justify-center">
                <Icon name="chevron" className="size-[7px]" />
              </span>
            </div>
          </div>
        ))}
      </div>
      <button type="button" className="w-full h-4 pb-px mb-[6px] bg-[#c9e4e9] flex items-center gap-[5px] pl-[5px]">
        <svg viewBox="0 0 6 7" className="w-[5px] h-[7px]" aria-hidden="true"><path d="M1 .5v6L5 3.500z" fill="none" stroke="#333" strokeWidth="0.900" /></svg>
        Style
      </button>
    </div>
  </section>
);

const Canvas = () => (
  <main className="relative flex-1 min-w-0 overflow-hidden bg-[#f8fbfb]">
    <svg className="absolute inset-0 w-full h-full" aria-label="Sketch view">
      <text x="320" y="321" fontSize="15" fill="#d9dbdb" transform="rotate(-44.600 320 321)">
        Copyright © 2026 - www.p30download.com
      </text>
      <path d="M153.500 263.500H501M327.500 98v330" stroke="#8d8f90" strokeWidth="1" />
      <circle cx="327.500" cy="263.500" r="69.500" fill="none" stroke="#dc3361" strokeWidth="1.500" />
      <g stroke="#a5edf5" strokeWidth="1" fill="#8ee6f0">
        <path d="M265 233L388 293M327.500 263.500L357 203" />
        <path d="M265 233l8 1.500-2 4zM388 293l-8-1.500 2-4zM357 203l-.5 8-4-2zM328 262l.5-8 4 2z" />
      </g>
      <path d="M327.500 263V242" stroke="#1f7f2a" strokeWidth="2.500" />
      <path d="M327.500 233l3 10h-6z" fill="#1fa52c" />
      <path d="M324.500 221.500l3 3.500 3-3.500M327.500 225v4" fill="none" stroke="#35c83c" strokeWidth="1.300" />
      <path d="M328 263.500h20" stroke="#b03a2c" strokeWidth="2.500" />
      <path d="M358 263.500l-10-3v6z" fill="#b83a28" />
      <path d="M362 260.500l6 6M368 260.500l-6 6" stroke="#d5503e" strokeWidth="1.200" />
      <rect x="325" y="261" width="5" height="5" fill="#bdf2f6" stroke="#12305e" strokeWidth="1.300" />
      <circle cx="327.500" cy="98.500" r="2.500" fill="#8fe4ee" stroke="#234" />
      <circle cx="327.500" cy="428" r="2.500" fill="#8fe4ee" stroke="#234" />
      <path d="M380 294h8M393 294h8M390.500 284v7M390.500 297v7" stroke="#222" strokeWidth="2" />
      <path d="M381 294h6M394 294h6M390.500 285v5M390.500 298v5" stroke="#fff" strokeWidth="0.700" />
    </svg>

    <button type="button" aria-label="Accept" className="absolute left-1 top-[4px]">
      <Icon name="check" className="size-[17px]" />
    </button>
    <input
      aria-label="Radius value"
      defaultValue="22.89 mm"
      className="absolute left-[350px] top-[163px] w-[44px] h-[14px] bg-white border border-[#2b7b92] text-center text-[7px] outline-none"
    />
    <div className="absolute left-[398px] top-[302px] w-[44px] h-[14px] bg-white border border-[#2b7b92] p-px">
      <input
        aria-label="Diameter value"
        defaultValue="45.78 mm"
        className="block w-full h-full bg-[#0873d3] text-[#d5e8fa] text-center text-[7px] outline-none"
      />
    </div>

    <CircleDialog />

    <div className="absolute right-[25px] bottom-[24px] w-[37px] h-[38px] border border-[#c6c9ca]">
      <svg viewBox="0 0 37 38" className="w-full h-full" aria-hidden="true">
        <path d="M18.500 19V4M16.500 7l2-4 2 4" fill="none" stroke="#7be07f" />
        <path d="M20 19h15M31 17.500l4 1.500-4 1.500" fill="none" stroke="#ec8b82" />
        <circle cx="18.500" cy="19" r="2.500" fill="#e0d356" />
        <text x="18.500" y="22" fontSize="8" textAnchor="middle" fill="#666">TOP</text>
      </svg>
    </div>
  </main>
);

const folders = [
  '06C chain',
  '10mm Shock Absorber',
  '10mm-bearing-skf-6000-rs-667-1122',
  '116 dia Wheel',
  'Clutch',
  'Drive Shaft',
  'F360 Imports',
  'Freewheel',
  'Mass Mocks',
  'Replica Bevel Gear Box',
];

const files = [
  '8T Sprocket 5mm bore 2.par',
  '8T Sprocket 5mm bore.par',
  '42mm id Bearing housing.par',
  'B Housing to Base frame.par',
  'Base (Ordered).par',
  'Base H Layout (Ordered).par',
  'Base.par',
  'Bevel (1).par',
  'Bevel Gear.par',
  'Circle Box Bracket.par',
  'Circular Attachment Wheel Axle.par',
  'Component1.par',
  'Component1_1.par',
  'Component1_2.par',
  'Component1_3.par',
  'D Shaft G Box Pin.par',
  'D50 L55 FW.par',
  'Driven SP 10mm bore.par',
  'Front Bumper.par',
  'FW Axle.par',
  'FW GB Linker.par',
  'FW Shaft Holding Mount.par',
  'FW Shaft.par',
  'FW Solid Disk.par',
  'Grub screw wheel attach.par',
  'Motor bracket.par',
  'Motor Cage.par',
  'Motor to Gear connector.par',
  'Rear Plate Shocks Reciever.par',
  'Shaft Hold.par',
  'Suspension joiner.par',
  'Swing Arm.par',
  'Tire.par',
  'Top knuckle contr',
  'Top suspension lin',
  'Top suspension lin',
  'Wheel Knuckle.pa',
  'Wheel.par',
  'Wishbone arm L.p',
  'Wishbone Arm.pa',
];

const FeatureLibrary = () => {
  const [selected, setSelected] = useState(0);

  return (
    <aside className="w-[212px] shrink-0 bg-[#f8fbfb] border-l border-[#c3c6c7] pl-[3px] pb-[3px] flex flex-col">
      <div className="h-3 shrink-0 bg-[#056d95] text-[#dcecf2] leading-[10px] flex items-center pl-1 pr-1">
        <Icon name="library" className="size-[10px]" />
        <h2 className="pl-[2px] pb-px flex-1">Feature Library</h2>
        <div className="flex gap-[3px]">
          <Icon name="options" className="size-[8px]" />
          <Icon name="pushpin" className="size-[8px]" />
          <Icon name="close" className="size-[8px]" />
        </div>
      </div>
      <div className="h-[18px] shrink-0 flex bg-[#f1f1f1]">
        <div className="flex items-center gap-[7px] pl-[2px] bg-white pr-2">
          {['library', 'gaugeFaint', 'tiles', 'rss', 'wrench', 'layers'].map(n => (
            <button key={n} type="button" aria-label={n}><Icon name={n} className="size-[12px]" /></button>
          ))}
        </div>
      </div>
      <div className="h-[23px] shrink-0 bg-white flex items-center justify-end gap-[3px] pr-px">
        {['treeGrid', 'plus', 'home', 'back', 'forward', 'folderUp', 'folderNew'].map(n => (
          <button key={n} type="button" aria-label={n} className="size-[13px] border border-[#d9dcdd] rounded-xs flex items-center justify-center">
            <Icon name={n} className="size-[10px]" />
          </button>
        ))}
        <button type="button" aria-label="View" className="w-[18px] h-[13px] border border-[#d9dcdd] rounded-xs flex items-center justify-center gap-px">
          <Icon name="tableView" className="size-[10px]" />
          <Caret />
        </button>
        <button type="button" aria-label="Search" className="size-[13px] ml-px border border-[#d9dcdd] rounded-xs flex items-center justify-center">
          <Icon name="search" className="size-[10px]" />
        </button>
      </div>
      <div className="relative h-[14px] shrink-0">
        <select aria-label="Folder" className="appearance-none w-full h-full pl-[14px] bg-white border border-[#d0d2d3] text-[7px] leading-[10px]">
          <option>CAD Car</option>
        </select>
        <Icon name="folder" className="absolute left-[2px] top-[2px] size-[10px]" />
        <Icon name="chevron" className="absolute right-[3px] top-[4px] size-[7px]" />
      </div>
      <label className="h-[15px] shrink-0 bg-white border border-[#d9dcdd] flex items-center pl-px pr-1">
        <input type="text" aria-label="Find a file" placeholder="Type to find a file or folder" className="w-0 flex-1 outline-none placeholder:text-[#666]" />
        <Icon name="find" className="size-[7px]" />
      </label>
      <div className="flex-1 min-h-0 flex flex-col border border-t-2 border-[#8f9293] bg-white">
        <ul className="flex-1 min-h-0 overflow-hidden grid grid-flow-col auto-cols-max grid-rows-[repeat(41,minmax(0,1fr))] font-['Noto_Sans',sans-serif] text-[7px] leading-[10px]">
          {[...folders, ...files].map((f, i) => {
            const isFolder = i < folders.length;
            return (
              <li key={i} className="flex items-center">
                <button
                  type="button"
                  onClick={() => setSelected(i)}
                  className="min-w-[137px] flex items-center gap-px whitespace-nowrap text-[#222]"
                >
                  <Icon name={isFolder ? (i === selected ? 'folderDark' : 'folder') : 'part'} className="size-[10px]" />
                  <span className={clsx('pr-px', i === selected && 'bg-[#ececec]')}>{f}</span>
                </button>
              </li>
            );
          })}
        </ul>
        <div className="h-[11px] shrink-0 bg-[#f0f0f0] flex items-center pl-[11px]">
          <div className="w-[91px] h-px bg-[#8b8b8b]" />
        </div>
      </div>
    </aside>
  );
};

const StatusBar = () => (
  <div className="h-[14px] shrink-0 bg-[#005b87] flex items-center justify-end gap-[3px] pr-[3px]">
    {['stZoomArea', 'stZoom', 'stPan', 'stFit', 'stWidth', 'stRotate', 'stCube', 'stStack'].map(n => (
      <button key={n} type="button" aria-label={n} className="w-3 flex justify-center"><Icon name={n} className="size-[10px]" /></button>
    ))}
    <button type="button" aria-label="Zoom out"><Icon name="minus" className="size-[9px]" /></button>
    <input
      type="range"
      aria-label="Zoom"
      defaultValue={41}
      className="appearance-none w-[74px] h-px bg-[#5d9ab4] [&::-webkit-slider-thumb]:appearance-none [&::-webkit-slider-thumb]:w-1 [&::-webkit-slider-thumb]:h-[7px] [&::-webkit-slider-thumb]:bg-white"
    />
    <button type="button" aria-label="Zoom in"><Icon name="plusRound" className="size-[9px]" /></button>
    <div className="flex items-center gap-[6px] pl-[3px]">
      <Icon name="youtube" className="size-[10px]" />
      <Icon name="record" className="size-[10px]" />
      <Icon name="upload" className="size-[10px]" />
    </div>
  </div>
);

// Taskbar icons use an 18x18 grid
const apps: { name: string; running?: boolean; active?: boolean; icon: React.ReactNode }[] = [
  { name: 'Task view', icon: <><path d="M1 6h11v10H1z" fill="#8b8b8b" /><path d="M6 1h11v10H6z" fill="#f1f1f1" /><path d="M6 6h6v5H6z" fill="#bdbdbd" /></> },
  { name: 'Weather', icon: <><path d="M1 9h9M3 12h12M8 15h5M10 9c3 0 3-3 1-3M15 12c3 0 3-4 1-4" fill="none" stroke="#9cb8cc" strokeWidth="1.700" /><text x="9" y="5.500" fontSize="8" fontWeight="700" fill="#fff">11°</text></> },
  { name: 'Edge', running: true, icon: <><circle cx="9" cy="9" r="8" fill="#1a7fd0" /><path d="M1.500 7A8 8 0 0117 9c0 3-3 4.500-6 3 2-3 0-6-3-6-2.500 0-5 .5-6.500 1z" fill="#3cc6a0" /><path d="M1.200 8C3 5 8 5 10 8c-3-1-4.500 1.500-3.500 4s4 4 8 2.500A8 8 0 011 9z" fill="#1459a8" /><path d="M10 8.500c-1.800 0-1.800 3 1 3.700" fill="none" stroke="#e8f5fb" strokeWidth="1.300" /></> },
  { name: 'Remote', icon: <><path d="M1 2h13v11H1z" fill="#1987d9" /><path d="M5 4h12v11h-3v2H9v-2H5z" fill="#1173c4" /><path d="M5 2l3 3 3-3z" fill="#7cc7f7" /></> },
  { name: 'Explorer', running: true, icon: <><path d="M1 2h6l2 2h8v12H1z" fill="#e9a827" /><path d="M1 6h16v10H1z" fill="#ffd45c" /><path d="M4 11h10v5H4z" fill="#1d6fc0" /></> },
  { name: 'Calculator', icon: <><path d="M3 1h12v16H3z" fill="#7f97a6" /><path d="M5 3h8v3H5z" fill="#e7f5fb" /><path d="M5 8h2v2H5zM8 8h2v2H8zM11 8h2v2h-2zM5 11h2v2H5zM8 11h2v2H8zM5 14h2v2H5zM8 14h2v2H8z" fill="#e7eef2" /><path d="M11 11h2v5h-2z" fill="#1d5fa0" /></> },
  { name: 'Snipping tool', running: true, icon: <><path d="M1 1h13v13H1z" fill="#f4f4f4" /><path d="M3.500 3.500h8v8h-8z" fill="none" stroke="#c9452c" strokeDasharray="2 1" /><path d="M8 10l8 1M10 15l5-7" stroke="#3e9bd8" strokeWidth="2" /><circle cx="9" cy="15.500" r="2" fill="#8fc6ea" /></> },
  { name: 'QuickBooks', icon: <><circle cx="9" cy="9" r="8" fill="#5c97cf" stroke="#a9cbec" /><text x="9" y="12.500" fontSize="10" textAnchor="middle" fill="#e8f2fb">qb</text></> },
  { name: 'Discord', running: true, icon: <><circle cx="9" cy="9" r="8" fill="#5566e8" /><path d="M5 6c2-1.500 6-1.500 8 0 1 2 1.500 4 1 6l-2.500 1-.7-1.300H7.200L6.500 13 4 12c-.5-2 0-4 1-6z" fill="#fff" /><circle cx="7.200" cy="9.300" r="1.100" fill="#5566e8" /><circle cx="10.800" cy="9.300" r="1.100" fill="#5566e8" /></> },
  { name: 'Surfshark', running: true, icon: <><path d="M7 1h9v11c0 3-4 5-6 5H3V7c0-3 1-6 4-6z" fill="#1b8494" /><path d="M12 4c-3 0-3 2-3 4s0 5-3 5" fill="none" stroke="#fff" strokeWidth="2" /></> },
  { name: 'PowerPoint', running: true, icon: <><circle cx="11" cy="9" r="7" fill="#ed6c47" /><path d="M11 2a7 7 0 017 7h-7z" fill="#ff8f6b" /><path d="M0 4h10v10H0z" fill="#c43e1c" /><text x="5" y="12" fontSize="8" fontWeight="700" textAnchor="middle" fill="#fff">P</text></> },
  { name: 'Solid Edge', running: true, active: true, icon: <><path d="M1 4h12v13H1z" fill="#139193" /><path d="M3 1h14v14H3z" fill="#284ba9" /><text x="10" y="11.500" fontSize="8" fontWeight="700" textAnchor="middle" fill="#fff">SE</text></> },
  { name: 'Notepad', running: true, icon: <><path d="M3 2h12v15H3z" fill="#5fc8ea" /><path d="M3 1h12v3H3z" fill="#2b7b9c" /><path d="M5 7h8M5 10h8M5 13h6" stroke="#1c5673" /><path d="M3 15.500h12V17H3z" fill="#f0e2c6" /></> },
  { name: 'Clipchamp', running: true, icon: <><path d="M1 7h16v10H1z" fill="#8d62f0" /><path d="M1 7h16l-9 5H1z" fill="#d7a3ff" /><path d="M1 4l14-3 1 4L1 7z" fill="#9a56cf" /></> },
  { name: 'Audacity', running: true, icon: <><path d="M3 13V9a6 6 0 0112 0v4" fill="none" stroke="#1b20d0" strokeWidth="2" /><path d="M1 9h3v6H1zM14 9h3v6h-3z" fill="#1015b8" /><circle cx="9" cy="11" r="4.500" fill="#f2a51c" /><path d="M5 11h8" stroke="#e0301a" strokeWidth="2" /></> },
  { name: 'Monitor', running: true, icon: <><path d="M1 3h16v12H1z" fill="#0f6ab5" /><path d="M1 3h16v3C10 6 7 11 1 12z" fill="#3fd0e8" /><path d="M1 14c5-1 8-5 16-6v4c-5 0-8 3-12 3H1z" fill="#0b3f82" /></> },
];

const Taskbar = () => (
  <footer className="h-[31px] shrink-0 bg-[#202021] text-white flex items-center pl-[14px] border-t border-[#33393c]">
    <button type="button" aria-label="Start">
      <svg viewBox="0 0 16 16" className="size-4" aria-hidden="true">
        <path d="M0 0h7.500v7.500H0z" fill="#6fd3fb" />
        <path d="M8.500 0H16v7.500H8.500zM0 8.500h7.500V16H0z" fill="#3fb8f3" />
        <path d="M8.500 8.500H16V16H8.500z" fill="#1d9ce8" />
      </svg>
    </button>
    <label className="ml-2 w-[147px] h-[22px] rounded-full bg-[#3b3b3c] border border-[#4a4a4b] flex items-center gap-[6px] pl-2 pr-[9px]">
      <svg viewBox="0 0 10 10" className="size-[10px]" aria-hidden="true">
        <circle cx="4.200" cy="4.200" r="3.400" fill="none" stroke="#ddd" strokeWidth="1.200" />
        <path d="M6.700 6.700L9.500 9.500" stroke="#ddd" strokeWidth="1.200" />
      </svg>
      <input type="text" aria-label="Search" placeholder="Search" className="w-0 flex-1 outline-none text-[9px] placeholder:text-[#c6c6c6]" />
      <svg viewBox="0 0 18 17" className="w-[18px] h-[17px]" aria-hidden="true">
        <g fill="none" stroke="#e2512f" strokeWidth="2">
          <circle cx="9" cy="4" r="3" />
          <circle cx="4" cy="6" r="2.500" />
          <circle cx="14" cy="6" r="2.500" />
          <path d="M2 9v4h3M16 9v4h-3" />
        </g>
        <circle cx="9" cy="4" r="1.500" fill="#f2b53c" />
        <path d="M6 8h6l1 4-3 4H8l-3-4z" fill="#2b9c8d" />
        <circle cx="9" cy="9" r="2" fill="#c5402b" />
      </svg>
    </label>
    <div className="w-[470px] flex">
      {apps.map(a => (
        <button key={a.name} type="button" aria-label={a.name} className="flex-1 flex justify-center">
          <span className={clsx('w-[27px] h-[27px] pt-[4px] rounded-xs flex flex-col items-center gap-[3px]', a.active && 'bg-[#303031]')}>
            <svg viewBox="0 0 18 18" className="size-[17px] overflow-visible" aria-hidden="true">{a.icon}</svg>
            {a.running && <i className={clsx('h-[2px] rounded-full', a.active ? 'w-[10px] bg-[#58b6ea]' : 'w-1 bg-[#8e8e8e]')} />}
          </span>
        </button>
      ))}
    </div>
    <div className="ml-auto flex items-center pr-[14px] gap-2">
      <svg viewBox="0 0 8 8" className="size-2 mr-[6px]" aria-hidden="true"><path d="M1 6l3-3.500L7 6" fill="none" stroke="#fff" /></svg>
      <svg viewBox="0 0 12 8" className="w-3 h-2" aria-hidden="true"><path d="M3 8a2.500 2.500 0 010-5 3.500 3.500 0 016.500-.5A2.800 2.800 0 019.500 8z" fill="#e5e9ec" /></svg>
      <svg viewBox="0 0 10 12" className="w-[10px] h-3 ml-[2px]" aria-hidden="true">
        <rect x="3.500" y="1" width="3" height="6" rx="1.500" fill="none" stroke="#7fb4d2" />
        <path d="M1.500 5a3.500 3.500 0 007 0M5 8.500V11" fill="none" stroke="#7fb4d2" />
      </svg>
      <svg viewBox="0 0 12 12" className="size-3" aria-hidden="true"><path d="M8 1.500H1v7h9V6M3 11h5M9 1h3v3H9zM10.500 4v3" fill="none" stroke="#ddd" /></svg>
      <svg viewBox="0 0 12 12" className="size-3 -ml-1" aria-hidden="true"><path d="M1 4h2l3-2.500v9L3 8H1zM8 4c1 1 1 3 0 4M9.500 2.500c2 2 2 5 0 7" fill="none" stroke="#ddd" /></svg>
      <div className="pl-px text-right leading-[11px]">
        <div>15:09</div>
        <div>15/04/2024</div>
      </div>
      <div className="relative flex items-center gap-[10px] -ml-1">
        <svg viewBox="0 0 12 12" className="size-3" aria-hidden="true"><path d="M1.500 9.500h9l-1-2V5a3.500 3.500 0 00-7 0v2.500zM5 11h2" fill="none" stroke="#ddd" /></svg>
        <svg viewBox="0 0 18 16" className="w-[18px] h-4" aria-hidden="true">
          <path d="M3 2h6l2 5-4 6H3C0 12 0 4 3 2z" fill="#3a8fe4" />
          <path d="M9 1h4c3 1 5 6 4 9l-6 1-3-4z" fill="#b15ad6" />
          <path d="M6 9h9v6H6z" fill="#f2b02b" />
        </svg>
        <span className="absolute left-0 top-0 text-[14px] leading-[17px] text-[#b9b9b9] opacity-80">ûdemy</span>
      </div>
    </div>
  </footer>
);

const SharingBar = () => (
  <div className="absolute left-1/2 -translate-x-1/2 bottom-[59px] w-[275px] h-[29px] bg-[#525252] text-white shadow-lg flex items-center pl-[7px] pr-2 font-['Liberation_Sans',sans-serif]">
    <div className="w-1 h-[7px] border-x border-[#ddd]" />
    <span className="pl-[7px] flex-1 whitespace-nowrap">app.clipchamp.com is sharing your screen.</span>
    <button type="button" className="w-[67px] h-[21px] bg-[#0067c0] font-bold rounded-xs">Stop sharing</button>
    <a href="#hide" className="pl-2 pr-px underline text-[#8db9e6]">Hide</a>
  </div>
);

const App: React.FC = () => (
  <div className="relative h-screen flex flex-col overflow-hidden bg-[#f8fbfb] font-['Open_Sans','Noto_Sans',sans-serif] text-[8px] leading-[11px] text-[#222]">
    <TitleBar />
    <Ribbon />
    <QuickToolbar />
    <div className="flex-1 min-h-0 flex">
      <div className="w-[19px] shrink-0 flex flex-col items-center pt-[5px] gap-[3px] pr-[3px] text-[#cfd2d3]">
        <Icon name="engRef" className="size-[13px]" />
        <span className="[writing-mode:vertical-rl]">Engineering Reference</span>
      </div>
      <div className="flex-1 min-w-0 flex flex-col">
        <div className="h-[17px] shrink-0 bg-white border-b-2 border-[#dcdede] border-t border-t-[#b9bcbd] flex items-center">
          <span className="w-6 self-stretch bg-[#056d95] flex items-center justify-center"><Icon name="command" /></span>
          <span className="pl-px pb-px whitespace-pre">Click for a point on the circle.  Snap to keypoints: (C)enter, (E)ndpoint, (M)idpoint or (I)ntersection.</span>
        </div>
        <DocTabs />
        <div className="flex-1 min-h-0 flex">
          <PathFinder />
          <Canvas />
        </div>
      </div>
      <FeatureLibrary />
    </div>
    <StatusBar />
    <Taskbar />
    <SharingBar />
  </div>
);

export default App;
